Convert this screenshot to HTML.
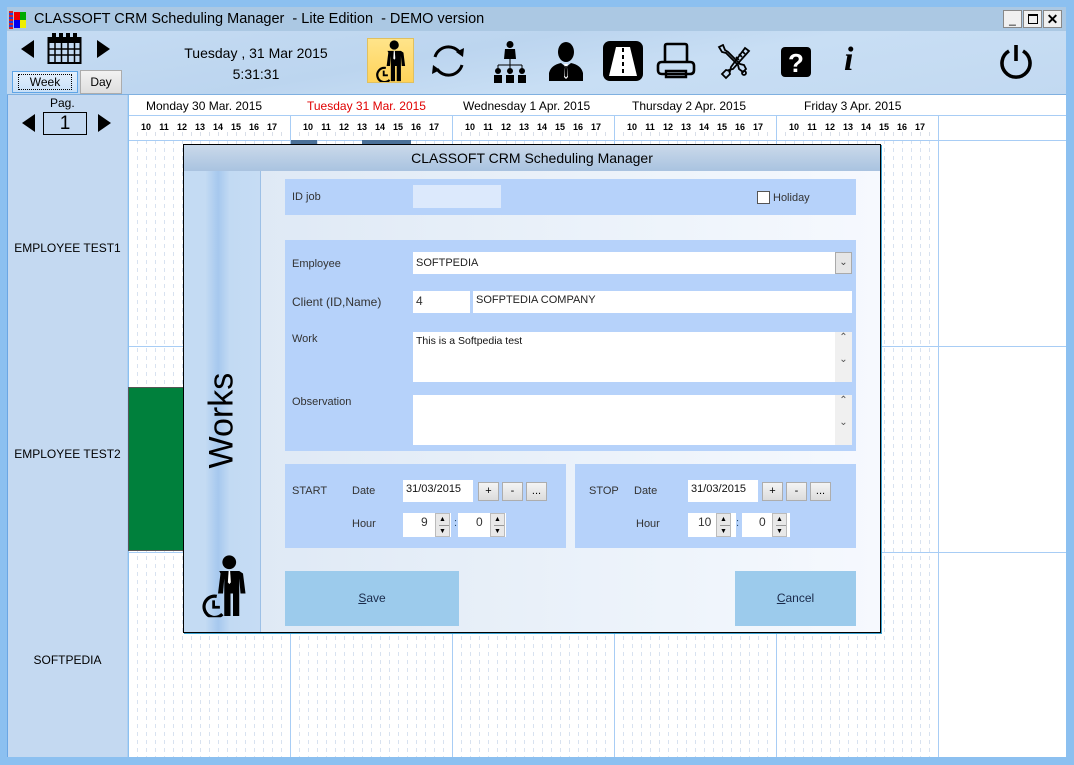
<!DOCTYPE html>
<html><head><meta charset="utf-8">
<style>
*{margin:0;padding:0;box-sizing:border-box}
body{width:1074px;height:765px;position:relative;overflow:hidden;font-family:"Liberation Sans",sans-serif;background:#8cc0f0}
.a{position:absolute}
.hr{position:absolute;font-size:9px;width:18px;text-align:center;color:#000;top:122px;font-weight:bold}
.lbl{position:absolute;font-size:11px;color:#333}
.box{position:absolute;background:#fff}
.btn{position:absolute;width:21px;height:19px;background:linear-gradient(#f4f4f4,#dcdcdc);border:1px solid #adadad;font-size:11px;text-align:center;line-height:17px;color:#000}
.spin{position:absolute;width:15px;height:24px;background:#e8e8e8;border:1px solid #bbb}
.spin:before{content:"▲";position:absolute;top:0;left:3px;font-size:7px;line-height:11px}
.spin:after{content:"▼";position:absolute;top:11px;left:3px;font-size:7px;line-height:11px;border-top:1px solid #999;width:10px}
.emp{position:absolute;left:7px;width:121px;text-align:center;font-size:12px;color:#000}
</style></head><body>
<svg width="0" height="0" style="position:absolute">
<defs>
<symbol id="man" viewBox="0 0 40 50">
<circle cx="25" cy="6" r="5.5" fill="#000"/>
<path d="M17 13h16l3 2 2 16h-4l-1-12v30h-5V31h-2v18h-5V19l-1 12h-4l2-16z" fill="#000"/>
<path d="M24.5 13h1.2l0.6 9-1.2 1.5-1.2-1.5z" fill="#fff"/>
<path d="M15 33.3A8.5 8.5 0 1 0 19.5 47.5" fill="none" stroke="#000" stroke-width="2.6"/>
<path d="M12.5 36.5v5.5h5" fill="none" stroke="#000" stroke-width="2.2"/>
</symbol>
</defs></svg>

<div class="a" style="left:7px;top:7px;width:1059px;height:24px;background:#abc8e3"></div>
<div class="a" style="left:9px;top:11px;width:20px;height:18px">
<div class="a" style="left:0;top:0;width:4px;height:18px;background:repeating-linear-gradient(#e02020 0 2px,#2040e0 2px 4px)"></div>
<div class="a" style="left:5px;top:1px;width:6px;height:8px;background:#e00"></div><div class="a" style="left:11px;top:1px;width:6px;height:8px;background:#0a0"></div>
<div class="a" style="left:5px;top:9px;width:6px;height:8px;background:#00e"></div><div class="a" style="left:11px;top:9px;width:6px;height:8px;background:#ee0"></div>
</div>
<div class="a" style="left:34px;top:11px;font-size:14.5px;color:#000;white-space:pre">CLASSOFT CRM Scheduling Manager  - Lite Edition  - DEMO version</div>
<div class="a" style="left:1003px;top:10px;width:19px;height:18px;background:#f0f0f0;border:1px solid #888;font-size:12px;text-align:center;line-height:16px">_</div>
<div class="a" style="left:1023px;top:10px;width:19px;height:18px;background:#f0f0f0;border:1px solid #888"><div class="a" style="left:4px;top:3px;width:10px;height:10px;border:1.5px solid #000;border-top-width:2.5px"></div></div>
<div class="a" style="left:1043px;top:10px;width:19px;height:18px;background:#f0f0f0;border:1px solid #888;font-size:14px;font-weight:bold;text-align:center;line-height:16px">✕</div>

<div class="a" style="left:7px;top:31px;width:1059px;height:64px;background:linear-gradient(170deg,#c6dcf3 0%,#bcd5ef 40%,#c8def4 60%,#c2d9f1 100%)"></div>
<div class="a" style="left:7px;top:94px;width:1059px;height:1px;background:#7fb0e0"></div>
<div class="a" style="left:21px;top:40px;width:0;height:0;border-top:9px solid transparent;border-bottom:9px solid transparent;border-right:13px solid #000"></div>
<div class="a" style="left:97px;top:40px;width:0;height:0;border-top:9px solid transparent;border-bottom:9px solid transparent;border-left:13px solid #000"></div>
<svg class="a" style="left:47px;top:32px" width="36" height="33" viewBox="0 0 36 33"><rect x="1.5" y="6" width="32" height="25" fill="none" stroke="#000" stroke-width="2"/><rect x="1.5" y="6" width="32" height="5" fill="#000"/><g fill="#000"><rect x="5" y="1" width="4" height="6"/><rect x="12" y="1" width="4" height="6"/><rect x="19" y="1" width="4" height="6"/><rect x="26" y="1" width="4" height="6"/></g><g stroke="#000" stroke-width="1.5"><path d="M8 11v20M14.5 11v20M21 11v20M27.5 11v20M2 17h31M2 23h31"/></g></svg>
<div class="a" style="left:12px;top:71px;width:66px;height:22px;background:linear-gradient(#e4f0fc,#c8e0f8);border:1px solid #5fa5e6;font-size:12px;text-align:center;line-height:20px"><span style="border:1px dotted #000;padding:0 11px">Week</span></div>
<div class="a" style="left:80px;top:70px;width:42px;height:24px;background:linear-gradient(#f2f2f2,#dedede);border:1px solid #acacac;font-size:12px;text-align:center;line-height:22px">Day</div>
<div class="a" style="left:150px;top:45px;width:212px;text-align:center;font-size:14px">Tuesday ,  31 Mar 2015</div>
<div class="a" style="left:150px;top:66px;width:212px;text-align:center;font-size:14px">5:31:31</div>

<div class="a" style="left:367px;top:38px;width:47px;height:45px;background:linear-gradient(#ffe48a,#ffd35a);border:1px solid #e0c060"></div>
<svg class="a" style="left:372px;top:40px" width="36" height="42"><use href="#man"/></svg>
<svg class="a" style="left:428px;top:43px" width="40" height="36" viewBox="0 0 40 36"><path d="M7 14A14 14 0 0 1 32 10" fill="none" stroke="#000" stroke-width="3"/><path d="M34 22A14 14 0 0 1 9 26" fill="none" stroke="#000" stroke-width="3"/><path d="M28 9l8 -4 -1 9z" fill="#000"/><path d="M12 27l-8 4 1-9z" fill="#000"/></svg>
<svg class="a" style="left:492px;top:40px" width="36" height="44" viewBox="0 0 36 44"><circle cx="18" cy="4.5" r="3.5"/><path d="M13 9h10l1 10H12z"/><path d="M18 19v6M6 25h24M6 25v4M18 25v4M30 25v4" stroke="#000" stroke-width="1" fill="none"/><circle cx="6" cy="31" r="3"/><circle cx="18" cy="31" r="3"/><circle cx="30" cy="31" r="3"/><path d="M2 35h8v8H2zM14 35h8v8h-8zM26 35h8v8h-8z"/></svg>
<svg class="a" style="left:548px;top:41px" width="36" height="40" viewBox="0 0 36 40"><ellipse cx="18" cy="11" rx="8" ry="10"/><path d="M1 40v-8q2-8 12-10l5 4 5-4q10 2 12 10v8z"/><path d="M16 23h4l-1 3 1 10-2 2-2-2 1-10z" fill="#fff"/><path d="M17.2 25h1.6l.5 10-1.3 1.5-1.3-1.5z"/></svg>
<svg class="a" style="left:602px;top:40px" width="42" height="42" viewBox="0 0 42 42"><rect x="1" y="1" width="40" height="40" rx="7"/><path d="M14 7h14l7 29H7z" fill="#fff"/><path d="M21 8v28" stroke="#000" stroke-width="2" stroke-dasharray="4 3"/></svg>
<svg class="a" style="left:656px;top:42px" width="40" height="38" viewBox="0 0 40 38"><path d="M9 20V4q0-2 2-2h18q2 0 2 2v16" fill="none" stroke="#000" stroke-width="2.6"/><path d="M6 20h28q4 0 4 4v4q0 4-4 4H6q-4 0-4-4v-4q0-4 4-4z" fill="none" stroke="#000" stroke-width="2.6"/><path d="M10 29h20v6H10z" fill="none" stroke="#000" stroke-width="2.4"/></svg>
<svg class="a" style="left:715px;top:44px" width="38" height="36" viewBox="0 0 38 36"><g fill="none" stroke="#000" stroke-width="1.8"><path d="M4 3l4-2 2 5 3 2 12 12 4 1 2 4-3 3-4-3-1-4L11 9 7 8z"/><circle cx="29" cy="29" r="2"/><path d="M30 4l4 3-16 18-4 1 1 4-4 4-4-4 4-4 4 1 1-4z"/><path d="M27 7l3 3M24 10l3 3M21 13l3 3"/></g></svg>
<svg class="a" style="left:780px;top:46px" width="32" height="32" viewBox="0 0 32 32"><rect x="1" y="1" width="30" height="30" rx="4"/><text x="16" y="26" font-family="Liberation Sans" font-weight="bold" font-size="26" fill="#fff" text-anchor="middle">?</text></svg>
<div class="a" style="left:844px;top:40px;font-family:'Liberation Serif',serif;font-style:italic;font-weight:bold;font-size:34px;line-height:40px">i</div>
<svg class="a" style="left:998px;top:43px" width="36" height="38" viewBox="0 0 36 38"><path d="M11 8A14 14 0 1 0 25 8" fill="none" stroke="#000" stroke-width="3.6"/><path d="M18 2v16" stroke="#000" stroke-width="3.6"/></svg>

<div class="a" style="left:7px;top:95px;width:121px;height:662px;background:#c4d9f1;border-right:1px solid #b0d0f0"></div>
<div class="a" style="left:7px;top:95px;width:1px;height:662px;background:#6aa6e4"></div>
<div class="a" style="left:50px;top:96px;font-size:12px">Pag.</div>
<div class="a" style="left:22px;top:114px;width:0;height:0;border-top:9px solid transparent;border-bottom:9px solid transparent;border-right:13px solid #000"></div>
<div class="a" style="left:43px;top:112px;width:44px;height:23px;border:1px solid #000;font-size:19px;text-align:center;line-height:21px">1</div>
<div class="a" style="left:98px;top:114px;width:0;height:0;border-top:9px solid transparent;border-bottom:9px solid transparent;border-left:13px solid #000"></div>
<div class="emp" style="top:241px">EMPLOYEE TEST1</div>
<div class="emp" style="top:447px">EMPLOYEE TEST2</div>
<div class="emp" style="top:653px">SOFTPEDIA</div>

<div class="a" style="left:129px;top:95px;width:937px;height:662px;background:#fff"></div>
<div class="a" style="left:129px;top:140px;width:809px;height:617px;background:repeating-linear-gradient(90deg,transparent 0 8px,#d8e2f0 8px 9px);-webkit-mask-image:repeating-linear-gradient(#000 0 4px,transparent 4px 8px);mask-image:repeating-linear-gradient(#000 0 4px,transparent 4px 8px)"></div>
<div class="a" style="left:129px;top:115px;width:937px;height:1px;background:#a8cdf5"></div>
<div class="a" style="left:129px;top:140px;width:937px;height:1px;background:#a8cdf5"></div>
<div class="a" style="left:129px;top:346px;width:937px;height:1px;background:#a8cdf5"></div>
<div class="a" style="left:129px;top:552px;width:937px;height:1px;background:#a8cdf5"></div>
<div class="a" style="left:129px;top:132px;width:809px;height:4px;background:repeating-linear-gradient(90deg,transparent 0 8px,#d8dee8 8px 9px)"></div>
<div class="a" style="left:290px;top:115px;width:1px;height:642px;background:#a8cdf5"></div>
<div class="a" style="left:452px;top:115px;width:1px;height:642px;background:#a8cdf5"></div>
<div class="a" style="left:614px;top:115px;width:1px;height:642px;background:#a8cdf5"></div>
<div class="a" style="left:776px;top:115px;width:1px;height:642px;background:#a8cdf5"></div>
<div class="a" style="left:938px;top:115px;width:1px;height:642px;background:#a8cdf5"></div>
<div class="a" style="left:146px;top:99px;font-size:12px">Monday 30 Mar. 2015</div>
<div class="a" style="left:307px;top:99px;font-size:12px;color:#e00000">Tuesday 31 Mar. 2015</div>
<div class="a" style="left:463px;top:99px;font-size:12px">Wednesday 1 Apr. 2015</div>
<div class="a" style="left:632px;top:99px;font-size:12px">Thursday 2 Apr. 2015</div>
<div class="a" style="left:804px;top:99px;font-size:12px">Friday 3 Apr. 2015</div>

<div class="hr" style="left:137px">10</div><div class="hr" style="left:155px">11</div><div class="hr" style="left:173px">12</div><div class="hr" style="left:191px">13</div><div class="hr" style="left:209px">14</div><div class="hr" style="left:227px">15</div><div class="hr" style="left:245px">16</div><div class="hr" style="left:263px">17</div>
<div class="hr" style="left:299px">10</div><div class="hr" style="left:317px">11</div><div class="hr" style="left:335px">12</div><div class="hr" style="left:353px">13</div><div class="hr" style="left:371px">14</div><div class="hr" style="left:389px">15</div><div class="hr" style="left:407px">16</div><div class="hr" style="left:425px">17</div>
<div class="hr" style="left:461px">10</div><div class="hr" style="left:479px">11</div><div class="hr" style="left:497px">12</div><div class="hr" style="left:515px">13</div><div class="hr" style="left:533px">14</div><div class="hr" style="left:551px">15</div><div class="hr" style="left:569px">16</div><div class="hr" style="left:587px">17</div>
<div class="hr" style="left:623px">10</div><div class="hr" style="left:641px">11</div><div class="hr" style="left:659px">12</div><div class="hr" style="left:677px">13</div><div class="hr" style="left:695px">14</div><div class="hr" style="left:713px">15</div><div class="hr" style="left:731px">16</div><div class="hr" style="left:749px">17</div>
<div class="hr" style="left:785px">10</div><div class="hr" style="left:803px">11</div><div class="hr" style="left:821px">12</div><div class="hr" style="left:839px">13</div><div class="hr" style="left:857px">14</div><div class="hr" style="left:875px">15</div><div class="hr" style="left:893px">16</div><div class="hr" style="left:911px">17</div>

<div class="a" style="left:291px;top:140px;width:26px;height:4px;background:#4a7098"></div>
<div class="a" style="left:362px;top:140px;width:49px;height:4px;background:#4a7098"></div>
<div class="a" style="left:128px;top:387px;width:56px;height:164px;background:#00803c;border:1px solid #555"></div>

<div class="a" style="left:183px;top:144px;width:698px;height:489px;border:1px solid #000;background:linear-gradient(90deg,#dce7f4,#eef4fb 70%,#f6f9fe);box-shadow:1px 1px 0 #3aa0d0">
<div class="a" style="left:0;top:0;width:696px;height:26px;background:linear-gradient(#cad9ea,#a9c3e0)"></div>
<div class="a" style="left:0;top:5px;width:696px;text-align:center;font-size:14px">CLASSOFT CRM Scheduling Manager</div>
<div class="a" style="left:0;top:26px;width:77px;height:461px;background:linear-gradient(90deg,#c4dbf3 0%,#c4dbf3 28%,#a6c8ee 45%,#c2daf3 60%,#c6dcf4 100%);border-right:1px solid #9dc0e6"></div>
<div class="a" style="left:-2px;top:264px;width:80px;transform:rotate(-90deg);font-size:34px;text-align:center;transform-origin:center">Works</div>
<svg class="a" style="left:14px;top:409px" width="50" height="64" viewBox="0 0 40 50"><use href="#man"/></svg>

<div class="a" style="left:101px;top:34px;width:571px;height:36px;background:#b6d2fa"></div>
<div class="lbl" style="left:108px;top:46px">ID job</div>
<div class="a" style="left:229px;top:40px;width:88px;height:23px;background:#dce9fc"></div>
<div class="a" style="left:573px;top:46px;width:13px;height:13px;background:#fff;border:1px solid #555"></div>
<div class="lbl" style="left:589px;top:47px">Holiday</div>

<div class="a" style="left:101px;top:95px;width:571px;height:211px;background:#b6d2fa"></div>
<div class="lbl" style="left:108px;top:113px">Employee</div>
<div class="box" style="left:229px;top:107px;width:439px;height:22px"></div>
<div class="lbl" style="left:232px;top:112px;color:#222">SOFTPEDIA</div>
<div class="a" style="left:651px;top:107px;width:17px;height:22px;background:#e6e6e6;border:1px solid #aaa;font-size:10px;text-align:center;line-height:19px;color:#444">⌄</div>
<div class="lbl" style="left:108px;top:150px;font-size:12px">Client (ID,Name)</div>
<div class="box" style="left:229px;top:146px;width:57px;height:22px"></div>
<div class="lbl" style="left:232px;top:149px;font-size:12px">4</div>
<div class="box" style="left:289px;top:146px;width:379px;height:22px"></div>
<div class="lbl" style="left:292px;top:149px;color:#222">SOFPTEDIA COMPANY</div>
<div class="lbl" style="left:108px;top:188px">Work</div>
<div class="box" style="left:229px;top:187px;width:439px;height:50px"></div>
<div class="a" style="left:651px;top:187px;width:17px;height:50px;background:#f0f0f0;font-size:10px;color:#555;text-align:center">⌃<br><br>⌄</div>
<div class="lbl" style="left:232px;top:190px;font-size:10.5px;color:#111">This is a Softpedia test</div>
<div class="lbl" style="left:108px;top:251px">Observation</div>
<div class="box" style="left:229px;top:250px;width:439px;height:50px"></div>
<div class="a" style="left:651px;top:250px;width:17px;height:50px;background:#f0f0f0;font-size:10px;color:#555;text-align:center">⌃<br><br>⌄</div>

<div class="a" style="left:101px;top:319px;width:281px;height:84px;background:#b6d2fa"></div>
<div class="lbl" style="left:108px;top:340px">START</div>
<div class="lbl" style="left:168px;top:340px">Date</div>
<div class="box" style="left:219px;top:335px;width:70px;height:22px"></div>
<div class="lbl" style="left:222px;top:338px;color:#111">31/03/2015</div>
<div class="btn" style="left:294px;top:337px">+</div><div class="btn" style="left:318px;top:337px">-</div><div class="btn" style="left:342px;top:337px">...</div>
<div class="lbl" style="left:168px;top:373px">Hour</div>
<div class="box" style="left:219px;top:368px;width:48px;height:24px"></div>
<div class="lbl" style="left:237px;top:370px;font-size:12px">9</div>
<div class="spin" style="left:251px;top:368px"></div>
<div class="lbl" style="left:270px;top:372px;color:#246">:</div>
<div class="box" style="left:274px;top:368px;width:48px;height:24px"></div>
<div class="lbl" style="left:292px;top:370px;font-size:12px">0</div>
<div class="spin" style="left:306px;top:368px"></div>

<div class="a" style="left:391px;top:319px;width:281px;height:84px;background:#b6d2fa"></div>
<div class="lbl" style="left:405px;top:340px">STOP</div>
<div class="lbl" style="left:450px;top:340px">Date</div>
<div class="box" style="left:504px;top:335px;width:70px;height:22px"></div>
<div class="lbl" style="left:507px;top:338px;color:#111">31/03/2015</div>
<div class="btn" style="left:578px;top:337px">+</div><div class="btn" style="left:602px;top:337px">-</div><div class="btn" style="left:626px;top:337px">...</div>
<div class="lbl" style="left:452px;top:373px">Hour</div>
<div class="box" style="left:504px;top:368px;width:48px;height:24px"></div>
<div class="lbl" style="left:514px;top:370px;font-size:12px">10</div>
<div class="spin" style="left:532px;top:368px"></div>
<div class="lbl" style="left:552px;top:372px;color:#246">:</div>
<div class="box" style="left:558px;top:368px;width:48px;height:24px"></div>
<div class="lbl" style="left:575px;top:370px;font-size:12px">0</div>
<div class="spin" style="left:588px;top:368px"></div>

<div class="a" style="left:101px;top:426px;width:174px;height:55px;background:#9ccbec;font-size:12px;text-align:center;line-height:55px;color:#1a2a4a"><u>S</u>ave</div>
<div class="a" style="left:551px;top:426px;width:121px;height:55px;background:#9ccbec;font-size:12px;text-align:center;line-height:55px;color:#1a2a4a"><u>C</u>ancel</div>
</div>

<div class="a" style="left:0;top:0;width:1074px;height:7px;background:#8cc0f0"></div>
<div class="a" style="left:0;top:0;width:7px;height:765px;background:#8cc0f0"></div>
<div class="a" style="left:1066px;top:0;width:8px;height:765px;background:#8cc0f0"></div>
<div class="a" style="left:0;top:757px;width:1074px;height:8px;background:#8cc0f0"></div>
</body></html>
